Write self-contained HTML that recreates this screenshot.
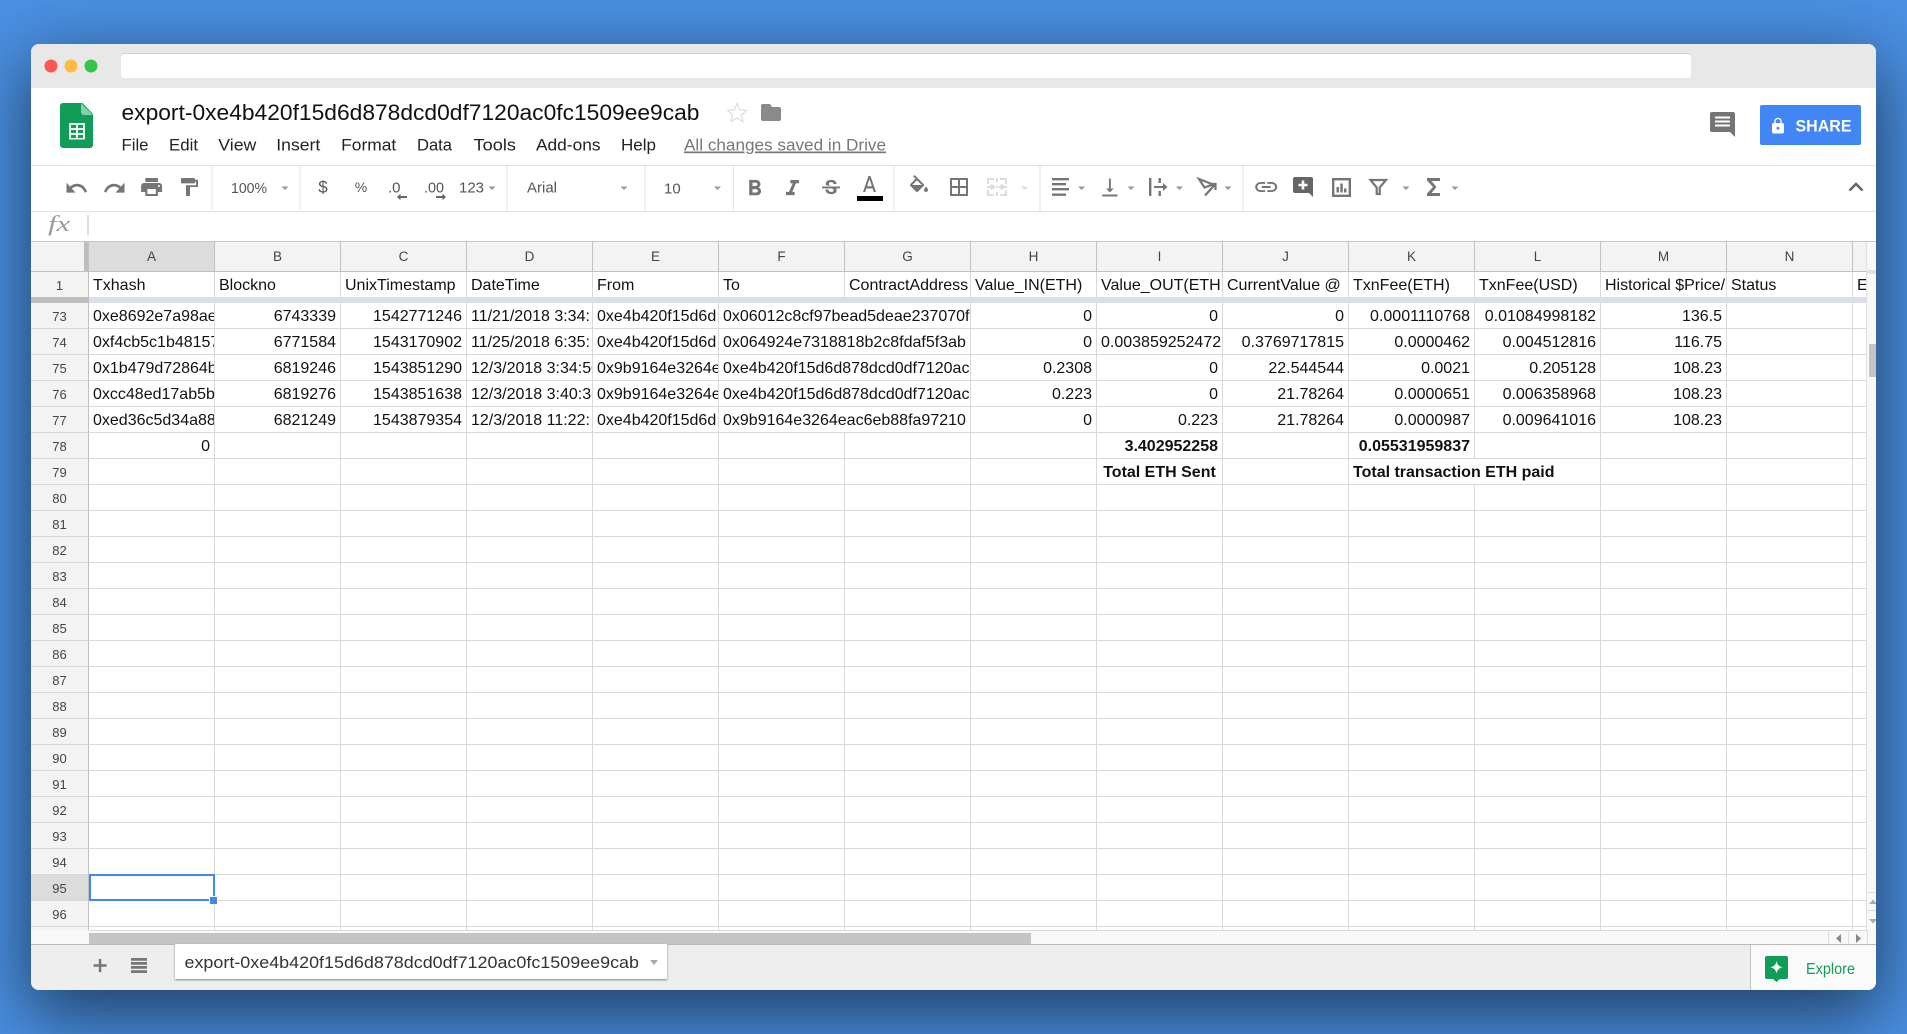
<!DOCTYPE html>
<html><head><meta charset="utf-8"><title>export</title>
<style>
html,body{margin:0;padding:0;width:1907px;height:1034px;overflow:hidden;background:#4a90e2}
.win{position:absolute;left:31px;top:44px;width:1845px;height:946px;border-radius:8px;background:#fff;box-shadow:0 22px 70px 4px rgba(0,0,0,.56)}
.clip{position:absolute;left:31px;top:44px;width:1845px;height:946px;border-radius:8px;overflow:hidden;background:#fff}
.in{position:absolute;left:-31px;top:-44px;width:1907px;height:1034px}
.a{position:absolute}
svg.o{position:absolute;left:0;top:0}
svg text{font-family:"Liberation Sans",Arial,sans-serif}
.grid{position:absolute;left:31px;top:242px;width:1835px;height:688px;overflow:hidden;background:#fff}
table{border-collapse:separate;border-spacing:0;table-layout:fixed;width:1835px;font:16px/22px "Liberation Sans",Arial,sans-serif;color:#111}
td{box-sizing:border-box;height:26px;padding:3px 4px 0;border-right:1px solid #d9d9d9;border-bottom:1px solid #d9d9d9;overflow:hidden;white-space:nowrap}
th{box-sizing:border-box;font-weight:normal;background:#f3f3f3;color:#444;font-size:13px;padding:3px 0 0;border-right:1px solid #c0c0c0;border-bottom:1px solid #d9d9d9;height:26px;overflow:hidden}
tr.h th{height:30px;font-size:13.5px;border-bottom:1px solid #c0c0c0;border-right:1px solid #c0c0c0;padding:0}
tr.f td,tr.f th{height:25px;border-bottom:0;line-height:22px}
tr.b td,tr.b th{height:6px;padding:0;border:0;font-size:0;line-height:0}
.r{text-align:right}.c{text-align:center}.w{font-weight:bold}
</style></head><body>
<div class="win"></div>
<div class="clip"><div class="in">
<div class="a" style="left:31px;top:44px;width:1845px;height:44px;background:#e8e8e8"></div>
<div class="a" style="left:121px;top:54px;width:1570px;height:24px;background:#fff;border-radius:3px;box-shadow:0 -1px 0 #cfcfcf"></div>
<div class="a" style="left:31px;top:165px;width:1845px;height:1px;background:#e2e2e2"></div>
<div class="a" style="left:31px;top:211px;width:1845px;height:1px;background:#e2e2e2"></div>
<div class="a" style="left:31px;top:241px;width:1845px;height:1px;background:#c8c8c8"></div>
<div class="grid"><table>
<colgroup><col style="width:58px"><col style="width:126px"><col style="width:126px"><col style="width:126px"><col style="width:126px"><col style="width:126px"><col style="width:126px"><col style="width:126px"><col style="width:126px"><col style="width:126px"><col style="width:126px"><col style="width:126px"><col style="width:126px"><col style="width:126px"><col style="width:126px"><col style="width:13px"></colgroup>
<tr class="h"><th style="background:linear-gradient(90deg,#f3f3f3 53px,#bdbdbd 53px)"></th><th style="background:#dcdcdc">A</th><th>B</th><th>C</th><th>D</th><th>E</th><th>F</th><th>G</th><th>H</th><th>I</th><th>J</th><th>K</th><th>L</th><th>M</th><th>N</th><th style="border-right:0"></th></tr>
<tr class="f"><th>1</th><td>Txhash</td><td>Blockno</td><td>UnixTimestamp</td><td>DateTime</td><td>From</td><td>To</td><td>ContractAddress</td><td>Value_IN(ETH)</td><td>Value_OUT(ETH</td><td>CurrentValue @</td><td>TxnFee(ETH)</td><td>TxnFee(USD)</td><td>Historical $Price/</td><td>Status</td><td style="border-right:0">ErrCode</td></tr>
<tr class="b"><th style="background:#bdbdbd"></th><td colspan="15" style="background:#dadee8"></td></tr>
<tr><th>73</th><td>0xe8692e7a98ae0f</td><td class="r">6743339</td><td class="r">1542771246</td><td>11/21/2018 3:34:</td><td>0xe4b420f15d6d</td><td colspan="2">0x06012c8cf97bead5deae237070f</td><td class="r">0</td><td class="r">0</td><td class="r">0</td><td class="r">0.0001110768</td><td class="r">0.01084998182</td><td class="r">136.5</td><td></td><td style="border-right:0"></td></tr>
<tr><th>74</th><td>0xf4cb5c1b48157a</td><td class="r">6771584</td><td class="r">1543170902</td><td>11/25/2018 6:35:</td><td>0xe4b420f15d6d</td><td colspan="2">0x064924e7318818b2c8fdaf5f3ab</td><td class="r">0</td><td class="r">0.003859252472</td><td class="r">0.3769717815</td><td class="r">0.0000462</td><td class="r">0.004512816</td><td class="r">116.75</td><td></td><td style="border-right:0"></td></tr>
<tr><th>75</th><td>0x1b479d72864b0c</td><td class="r">6819246</td><td class="r">1543851290</td><td>12/3/2018 3:34:50</td><td>0x9b9164e3264eac6</td><td colspan="2">0xe4b420f15d6d878dcd0df7120ac0fc1509ee9cab</td><td class="r">0.2308</td><td class="r">0</td><td class="r">22.544544</td><td class="r">0.0021</td><td class="r">0.205128</td><td class="r">108.23</td><td></td><td style="border-right:0"></td></tr>
<tr><th>76</th><td>0xcc48ed17ab5b0c</td><td class="r">6819276</td><td class="r">1543851638</td><td>12/3/2018 3:40:38</td><td>0x9b9164e3264eac6</td><td colspan="2">0xe4b420f15d6d878dcd0df7120ac0fc1509ee9cab</td><td class="r">0.223</td><td class="r">0</td><td class="r">21.78264</td><td class="r">0.0000651</td><td class="r">0.006358968</td><td class="r">108.23</td><td></td><td style="border-right:0"></td></tr>
<tr><th>77</th><td>0xed36c5d34a8888</td><td class="r">6821249</td><td class="r">1543879354</td><td>12/3/2018 11:22:</td><td>0xe4b420f15d6d</td><td colspan="2">0x9b9164e3264eac6eb88fa97210</td><td class="r">0</td><td class="r">0.223</td><td class="r">21.78264</td><td class="r">0.0000987</td><td class="r">0.009641016</td><td class="r">108.23</td><td></td><td style="border-right:0"></td></tr>
<tr><th>78</th><td class="r">0</td><td></td><td></td><td></td><td></td><td></td><td></td><td></td><td class="r w">3.402952258</td><td></td><td class="r w">0.05531959837</td><td></td><td></td><td></td><td style="border-right:0"></td></tr>
<tr><th>79</th><td></td><td></td><td></td><td></td><td></td><td></td><td></td><td></td><td class="c w">Total ETH Sent</td><td></td><td colspan="2" class="w">Total transaction ETH paid</td><td></td><td></td><td style="border-right:0"></td></tr>
<tr><th>80</th><td></td><td></td><td></td><td></td><td></td><td></td><td></td><td></td><td></td><td></td><td></td><td></td><td></td><td></td><td style="border-right:0"></td></tr>
<tr><th>81</th><td></td><td></td><td></td><td></td><td></td><td></td><td></td><td></td><td></td><td></td><td></td><td></td><td></td><td></td><td style="border-right:0"></td></tr>
<tr><th>82</th><td></td><td></td><td></td><td></td><td></td><td></td><td></td><td></td><td></td><td></td><td></td><td></td><td></td><td></td><td style="border-right:0"></td></tr>
<tr><th>83</th><td></td><td></td><td></td><td></td><td></td><td></td><td></td><td></td><td></td><td></td><td></td><td></td><td></td><td></td><td style="border-right:0"></td></tr>
<tr><th>84</th><td></td><td></td><td></td><td></td><td></td><td></td><td></td><td></td><td></td><td></td><td></td><td></td><td></td><td></td><td style="border-right:0"></td></tr>
<tr><th>85</th><td></td><td></td><td></td><td></td><td></td><td></td><td></td><td></td><td></td><td></td><td></td><td></td><td></td><td></td><td style="border-right:0"></td></tr>
<tr><th>86</th><td></td><td></td><td></td><td></td><td></td><td></td><td></td><td></td><td></td><td></td><td></td><td></td><td></td><td></td><td style="border-right:0"></td></tr>
<tr><th>87</th><td></td><td></td><td></td><td></td><td></td><td></td><td></td><td></td><td></td><td></td><td></td><td></td><td></td><td></td><td style="border-right:0"></td></tr>
<tr><th>88</th><td></td><td></td><td></td><td></td><td></td><td></td><td></td><td></td><td></td><td></td><td></td><td></td><td></td><td></td><td style="border-right:0"></td></tr>
<tr><th>89</th><td></td><td></td><td></td><td></td><td></td><td></td><td></td><td></td><td></td><td></td><td></td><td></td><td></td><td></td><td style="border-right:0"></td></tr>
<tr><th>90</th><td></td><td></td><td></td><td></td><td></td><td></td><td></td><td></td><td></td><td></td><td></td><td></td><td></td><td></td><td style="border-right:0"></td></tr>
<tr><th>91</th><td></td><td></td><td></td><td></td><td></td><td></td><td></td><td></td><td></td><td></td><td></td><td></td><td></td><td></td><td style="border-right:0"></td></tr>
<tr><th>92</th><td></td><td></td><td></td><td></td><td></td><td></td><td></td><td></td><td></td><td></td><td></td><td></td><td></td><td></td><td style="border-right:0"></td></tr>
<tr><th>93</th><td></td><td></td><td></td><td></td><td></td><td></td><td></td><td></td><td></td><td></td><td></td><td></td><td></td><td></td><td style="border-right:0"></td></tr>
<tr><th>94</th><td></td><td></td><td></td><td></td><td></td><td></td><td></td><td></td><td></td><td></td><td></td><td></td><td></td><td></td><td style="border-right:0"></td></tr>
<tr><th style="background:#dcdcdc">95</th><td></td><td></td><td></td><td></td><td></td><td></td><td></td><td></td><td></td><td></td><td></td><td></td><td></td><td></td><td style="border-right:0"></td></tr>
<tr><th>96</th><td></td><td></td><td></td><td></td><td></td><td></td><td></td><td></td><td></td><td></td><td></td><td></td><td></td><td></td><td style="border-right:0"></td></tr>
<tr><th></th><td></td><td></td><td></td><td></td><td></td><td></td><td></td><td></td><td></td><td></td><td></td><td></td><td></td><td></td><td style="border-right:0"></td></tr>
</table></div>
<!-- selection -->
<div class="a" style="left:89px;top:874px;width:122px;height:23px;border:2px solid #4285f4"></div>
<div class="a" style="left:209px;top:896px;width:7px;height:7px;background:#4285f4;border:1px solid #fff"></div>
<!-- v scrollbar -->
<div class="a" style="left:1866px;top:242px;width:10px;height:688px;background:#f8f8f8;border-left:1px solid #e0e0e0;box-sizing:border-box"></div>
<div class="a" style="left:1867px;top:270px;width:9px;height:4px;background:#e2e2e2"></div>
<div class="a" style="left:1869px;top:344px;width:7px;height:33px;background:#c4c4c4"></div>
<div class="a" style="left:1867px;top:892px;width:9px;height:19px;border-top:1px solid #ddd;border-bottom:1px solid #d5daf0;box-sizing:border-box"></div>
<!-- h scrollbar -->
<div class="a" style="left:31px;top:930px;width:1845px;height:14px;background:#f8f8f8"></div>
<div class="a" style="left:89px;top:930px;width:1778px;height:1px;background:#d9d9d9"></div>
<div class="a" style="left:89px;top:933px;width:942px;height:11px;background:#c4c4c4"></div>
<div class="a" style="left:1828px;top:930px;width:1px;height:14px;background:#ddd"></div>
<div class="a" style="left:1848px;top:930px;width:1px;height:14px;background:#ddd"></div>
<div class="a" style="left:1867px;top:930px;width:1px;height:14px;background:#ddd"></div>
<!-- bottom bar -->
<div class="a" style="left:31px;top:944px;width:1845px;height:46px;background:#eeeeee;border-top:1px solid #b8b8b8;box-sizing:border-box"></div>
<div class="a" style="left:1750px;top:945px;width:126px;height:45px;background:#fafafa;border-left:1px solid #c4c4c4;box-sizing:border-box"></div>
<div class="a" style="left:175px;top:944px;width:492px;height:35px;background:#fff;box-shadow:0 1px 2px rgba(0,0,0,.45)"></div>
<svg class="o" width="1907" height="1034" viewBox="0 0 1907 1034">
<circle cx="51" cy="66" r="6.5" fill="#fc5753"/><circle cx="71" cy="66" r="6.5" fill="#fdbc40"/><circle cx="91" cy="66" r="6.5" fill="#33c748"/>
<!-- logo -->
<path d="M63 103h19.500l10.500 11v31a3 3 0 0 1-3 3H63a3 3 0 0 1-3-3v-39a3 3 0 0 1 3-3z" fill="#0f9d58"/>
<path d="M81 103l12 12H84a3 3 0 0 1-3-3z" fill="#87ceac"/>
<rect x="69" y="123" width="16" height="16.500" fill="#e8f5ee"/>
<path d="M71 125h5v3h-5zM78 125h5v3h-5zM71 130h5v3h-5zM78 130h5v3h-5zM71 135h5v3h-5zM78 135h5v3h-5z" fill="#0f9d58"/>
<!-- title / menu -->
<text x="121.500" y="120" font-size="22.500" fill="#111" textLength="578" lengthAdjust="spacingAndGlyphs">export-0xe4b420f15d6d878dcd0df7120ac0fc1509ee9cab</text>
<g font-size="17" fill="#222" lengthAdjust="spacingAndGlyphs">
<text x="121.500" y="150.500" textLength="27" lengthAdjust="spacingAndGlyphs">File</text><text x="169" y="150.500" textLength="29" lengthAdjust="spacingAndGlyphs">Edit</text><text x="218.300" y="150.500" textLength="38" lengthAdjust="spacingAndGlyphs">View</text><text x="276.300" y="150.500" textLength="44" lengthAdjust="spacingAndGlyphs">Insert</text><text x="341.200" y="150.500" textLength="55" lengthAdjust="spacingAndGlyphs">Format</text><text x="417" y="150.500" textLength="35" lengthAdjust="spacingAndGlyphs">Data</text><text x="473.500" y="150.500" textLength="42.500" lengthAdjust="spacingAndGlyphs">Tools</text><text x="536" y="150.500" textLength="64.500" lengthAdjust="spacingAndGlyphs">Add-ons</text><text x="621" y="150.500" textLength="35" lengthAdjust="spacingAndGlyphs">Help</text>
</g>
<text x="684" y="150.500" font-size="17" fill="#777" text-decoration="underline" textLength="202" lengthAdjust="spacingAndGlyphs">All changes saved in Drive</text>
<path d="M737 103.500l2.700 6.300 6.800.6-5.100 4.500 1.500 6.700-5.900-3.500-5.900 3.500 1.500-6.700-5.100-4.500 6.800-.6z" fill="#fff" stroke="#dedede" stroke-width="1.300"/>
<path d="M763 104h7l2 3h7a2 2 0 0 1 2 2v10a2 2 0 0 1-2 2h-16a2 2 0 0 1-2-2v-13a2 2 0 0 1 2-2z" fill="#8a8a8a"/>
<!-- comment / share -->
<path d="M1712 112h21a2 2 0 0 1 2 2v23l-5-5h-18a2 2 0 0 1-2-2v-16a2 2 0 0 1 2-2z" fill="#757575"/>
<path d="M1715 116.500h15v2h-15zM1715 120.500h15v2h-15zM1715 124.500h15v2h-15z" fill="#fff"/>
<rect x="1760" y="105" width="101" height="40" rx="2" fill="#4285f4"/>
<g transform="translate(1769,117) scale(.75)"><path d="M18 8h-1V6c0-2.760-2.240-5-5-5S7 3.240 7 6v2H6c-1.100 0-2 .9-2 2v10c0 1.100.9 2 2 2h12c1.100 0 2-.9 2-2V10c0-1.100-.9-2-2-2zm-6 9c-1.100 0-2-.9-2-2s.9-2 2-2 2 .9 2 2-.9 2-2 2zm3.100-9H8.900V6c0-1.710 1.390-3.100 3.100-3.100 1.710 0 3.100 1.390 3.100 3.100v2z" fill="#fff"/></g>
<text x="1795.500" y="131.500" font-size="16.500" font-weight="bold" fill="#fff" textLength="56" lengthAdjust="spacingAndGlyphs">SHARE</text>
<!-- dividers -->
<path d="M212 166v44M300 166v44M507 166v44M645 166v44M733.500 166v44M894 166v44M1040 166v44M1243 166v44" stroke="#e2e2e2" stroke-width="1"/>
<g fill="#757575">
<path transform="translate(64.500,175) scale(1,1.100)" d="M12.500 8c-2.650 0-5.050.99-6.900 2.600L2 7v9h9l-3.620-3.620c1.390-1.160 3.160-1.880 5.120-1.880 3.540 0 6.550 2.310 7.600 5.500l2.370-.78C21.080 11.030 17.150 8 12.500 8z"/>
<path transform="translate(102.500,175) scale(1,1.100)" d="M18.400 10.600C16.550 8.990 14.150 8 11.500 8c-4.650 0-8.580 3.030-9.960 7.220L3.900 16c1.050-3.190 4.050-5.500 7.600-5.500 1.950 0 3.730.72 5.120 1.880L13 16h9V7l-3.600 3.600z"/>
<path transform="translate(139,175) scale(1.050,1)" d="M19 8H5c-1.660 0-3 1.340-3 3v6h4v4h12v-4h4v-6c0-1.660-1.340-3-3-3zm-3 11H8v-5h8v5zm3-7c-.55 0-1-.45-1-1s.45-1 1-1 1 .45 1 1-.45 1-1 1zm-1-9H6v4h12V3z"/>
<path transform="translate(177,176.200) scale(1,.9)" d="M18 4V3c0-.55-.45-1-1-1H5c-.55 0-1 .45-1 1v4c0 .55.45 1 1 1h12c.55 0 1-.45 1-1V6h1v4H9v11c0 .55.45 1 1 1h2c.55 0 1-.45 1-1v-9h8V4h-3z"/>
<path transform="translate(741.500,175.500) scale(1.100)" d="M15.600 10.790c.97-.67 1.650-1.770 1.650-2.790 0-2.260-1.750-4-4-4H7v14h7.040c2.090 0 3.710-1.700 3.710-3.790 0-1.520-.86-2.820-2.150-3.420zM10 6.500h3c.83 0 1.500.67 1.500 1.500s-.67 1.500-1.500 1.500h-3v-3zm3.500 9H10v-3h3.500c.83 0 1.500.67 1.500 1.500s-.67 1.500-1.500 1.500z"/>
<path transform="translate(779.500,175.700) scale(1.080)" d="M10 4v3h2.210l-3.420 8H6v3h8v-3h-2.210l3.420-8H18V4z"/>
<path transform="translate(819,177) scale(1,.95)" d="M7.240 8.750c-.26-.48-.39-1.030-.39-1.670 0-.61.13-1.160.4-1.670.26-.5.63-.93 1.110-1.290.48-.35 1.050-.63 1.700-.83.66-.19 1.390-.29 2.180-.29.81 0 1.540.11 2.210.34.66.22 1.230.54 1.690.94.47.4.83.88 1.080 1.430.25.55.38 1.150.38 1.810h-3.010c0-.31-.05-.59-.15-.85-.09-.27-.24-.49-.44-.68-.2-.19-.45-.33-.75-.44-.3-.1-.66-.16-1.060-.16-.39 0-.74.04-1.030.13-.29.09-.53.21-.72.36-.19.16-.34.34-.44.55-.1.21-.15.43-.15.66 0 .48.25.88.74 1.210.38.25.77.48 1.410.7H7.390c-.05-.08-.11-.17-.15-.25zM21 12v-2H3v2h9.620c.18.07.4.14.55.2.37.17.66.34.87.51.21.17.35.36.43.57.07.2.11.43.11.69 0 .23-.05.45-.14.66-.09.2-.23.38-.42.53-.19.15-.42.26-.71.35-.29.08-.63.13-1.010.13-.43 0-.83-.04-1.180-.13s-.66-.23-.91-.42c-.25-.19-.45-.44-.59-.75-.14-.31-.25-.76-.25-1.210H6.400c0 .55.08 1.130.24 1.580.16.45.37.85.65 1.210.28.35.6.66.98.92.37.26.78.48 1.220.65.44.17.9.3 1.380.39.48.08.96.13 1.440.13.8 0 1.530-.09 2.180-.28s1.210-.45 1.670-.79c.46-.34.82-.77 1.070-1.270s.38-1.070.38-1.710c0-.6-.1-1.140-.31-1.610-.05-.11-.11-.23-.17-.33H21z"/>
<path transform="translate(857.500,172.600) scale(1,1.140)" d="M11 3L5.500 17h2.250l1.120-3h6.250l1.120 3h2.250L13 3h-2zm-1.380 9L12 5.670 14.380 12H9.620z"/>
<path transform="translate(907,175)" d="M16.560 8.940L7.620 0 6.210 1.410l2.380 2.380-5.150 5.150c-.59.59-.59 1.540 0 2.120l5.500 5.500c.29.29.68.44 1.060.44s.77-.15 1.060-.44l5.500-5.500c.59-.58.59-1.530 0-2.120zM5.210 10L10 5.210 14.790 10H5.210zM19 11.500s-2 2.170-2 3.500c0 1.100.9 2 2 2s2-.9 2-2c0-1.330-2-3.500-2-3.500z"/>
<path transform="translate(947,175)" d="M3 3v18h18V3H3zm8 16H5v-6h6v6zm0-8H5V5h6v6zm8 8h-6v-6h6v6zm0-8h-6V5h6v6z"/>
<path d="M1052 178h17v2.400h-17zM1052 183h14v2.400h-14zM1052 188h17v2.400h-17zM1052 193.500h14v2.400h-14z"/>
<path transform="translate(1098.500,175.500) scale(.95,1)" d="M16 13h-3V3h-2v10H8l4 4 4-4zM4 19v2h16v-2H4z"/>
<path d="M1149 178h2.400v18H1149zM1158.500 178h2.400v5h-2.400zM1158.500 191h2.400v5h-2.400zM1154 186h9v-3l4.500 4-4.500 4v-3h-9z"/>
<path transform="translate(1253,175) scale(1.100,1)" d="M3.900 12c0-1.710 1.390-3.100 3.100-3.100h4V7H7c-2.760 0-5 2.240-5 5s2.240 5 5 5h4v-1.900H7c-1.710 0-3.100-1.390-3.100-3.100zM8 13h8v-2H8v2zm9-6h-4v1.900h4c1.710 0 3.100 1.390 3.100 3.100s-1.390 3.100-3.100 3.100h-4V17h4c2.760 0 5-2.240 5-5s-2.240-5-5-5z"/>
<path d="M1427 178h13v3h-8.500l5 6-5 6h8.500v3h-13v-2.500l6-6.500-6-6.500z"/>
</g>
<path d="M1199 179l14 5.500-8.500 3zM1205 195.500l10-11M1215.500 190v-6h-6" fill="none" stroke="#757575" stroke-width="2.200"/>
<path d="M1295 177h16a2 2 0 0 1 2 2v18l-4-4h-14a2 2 0 0 1-2-2v-12a2 2 0 0 1 2-2z" fill="#666"/>
<path d="M1301.700 180.500h2.600v3.200h3.200v2.600h-3.200v3.200h-2.600v-3.200h-3.200v-2.600h3.200z" fill="#fff"/>
<rect x="1333.200" y="179.200" width="16.600" height="16.600" fill="#fff" stroke="#757575" stroke-width="2.400"/>
<path d="M1336.500 187h2.500v5.500h-2.500zM1340.300 183.500h2.500v9h-2.500zM1344 188.500h2.500v4h-2.500z" fill="#757575"/>
<path d="M1370.500 180h15.500l-6.300 7.500v6.500h-3v-6.500z" fill="#fff" stroke="#757575" stroke-width="2.200"/>
<g fill="none" stroke="#dcdcdc" stroke-width="2">
<path d="M988 184v-5h6M1000 179h6v5M988 190v5h6M1000 195h6v-5M997 178v4M997 186v2M997 192v4"/>
<path d="M987 187h6M991 184.500l3 2.500-3 2.500M1007 187h-6M1003 184.500l-3 2.500 3 2.500"/>
</g>
<!-- toolbar text -->
<g fill="#555" font-size="15">
<text x="231" y="193" textLength="36" lengthAdjust="spacingAndGlyphs" font-size="14.500">100%</text>
<text x="323" y="192.500" font-size="17" text-anchor="middle">$</text>
<text x="361" y="192" font-size="14" text-anchor="middle">%</text>
<text x="388" y="192.500" font-size="15">.0</text>
<text x="424" y="192.500" font-size="15" textLength="20" lengthAdjust="spacingAndGlyphs">.00</text>
<text x="459" y="192.500">123</text>
<text x="527" y="192.500">Arial</text>
<text x="664" y="193.500">10</text>
</g>
<path d="M407 196v2h-6.500v2.300l-3.500-3.300 3.500-3.300V196zM436 196v2h6.500v2.300l3.500-3.300-3.500-3.300V196z" fill="#666"/>
<rect x="857" y="196" width="26" height="5" fill="#000"/>
<!-- carets -->
<path d="M281.500 186.500h7l-3.500 3.500zM488.500 186.500h7l-3.500 3.500zM620.500 186.500h7l-3.500 3.500zM714 186.500h7l-3.500 3.500zM1078 186.500h7l-3.500 3.500zM1127.500 186.500h7l-3.500 3.500zM1176 186.500h7l-3.500 3.500zM1224.500 186.500h7l-3.500 3.500zM1402.500 186.500h7l-3.500 3.500zM1451.500 186.500h7l-3.500 3.500z" fill="#999"/>
<path d="M1021 186.500h7l-3.500 3.500z" fill="#ddd"/>
<path d="M1849.500 190.500l6.500-6.500 6.500 6.500" fill="none" stroke="#666" stroke-width="2.600"/>
<!-- fx -->
<text x="48" y="231" font-size="22" font-style="italic" fill="#999" style="font-family:'Liberation Serif',serif" textLength="22" lengthAdjust="spacingAndGlyphs">fx</text>
<path d="M88 215v21" stroke="#ccc" stroke-width="1.200"/>
<!-- scroll arrows -->
<path d="M1873 899.500l-4 4.500h8zM1869 919h8l-4 4.500z" fill="#aaa"/>
<path d="M1841 934v9l-5-4.500zM1856 934v9l5-4.500z" fill="#888"/>
<!-- sheet bar -->
<path d="M98.800 959h2.500v5.300h5.300v2.500h-5.300v5.300h-2.500v-5.300h-5.300v-2.500h5.300z" fill="#777"/>
<path d="M131 958h16v2.800h-16zM131 962h16v2.800h-16zM131 966h16v2.800h-16zM131 970.200h16v2.800h-16z" fill="#777"/>
<text x="184.500" y="968" font-size="16.500" fill="#333" textLength="454.500" lengthAdjust="spacingAndGlyphs">export-0xe4b420f15d6d878dcd0df7120ac0fc1509ee9cab</text>
<path d="M650 960h8l-4 5z" fill="#aaa"/>
<path d="M1767 956h19a2 2 0 0 1 2 2v19a2 2 0 0 1-2 2h-6l-3.500 3-3.500-3h-6a2 2 0 0 1-2-2v-19a2 2 0 0 1 2-2z" fill="#0f9d58"/>
<path d="M1776.500 961c.8 3.800 1.800 5 6 6.300-4.200 1.300-5.200 2.500-6 6.200-.8-3.700-1.800-4.900-6-6.200 4.200-1.300 5.200-2.500 6-6.300z" fill="#fff"/>
<text x="1806" y="974" font-size="15.500" fill="#0f9d58" textLength="49" lengthAdjust="spacingAndGlyphs">Explore</text>
</svg>
</div></div>
</body></html>
